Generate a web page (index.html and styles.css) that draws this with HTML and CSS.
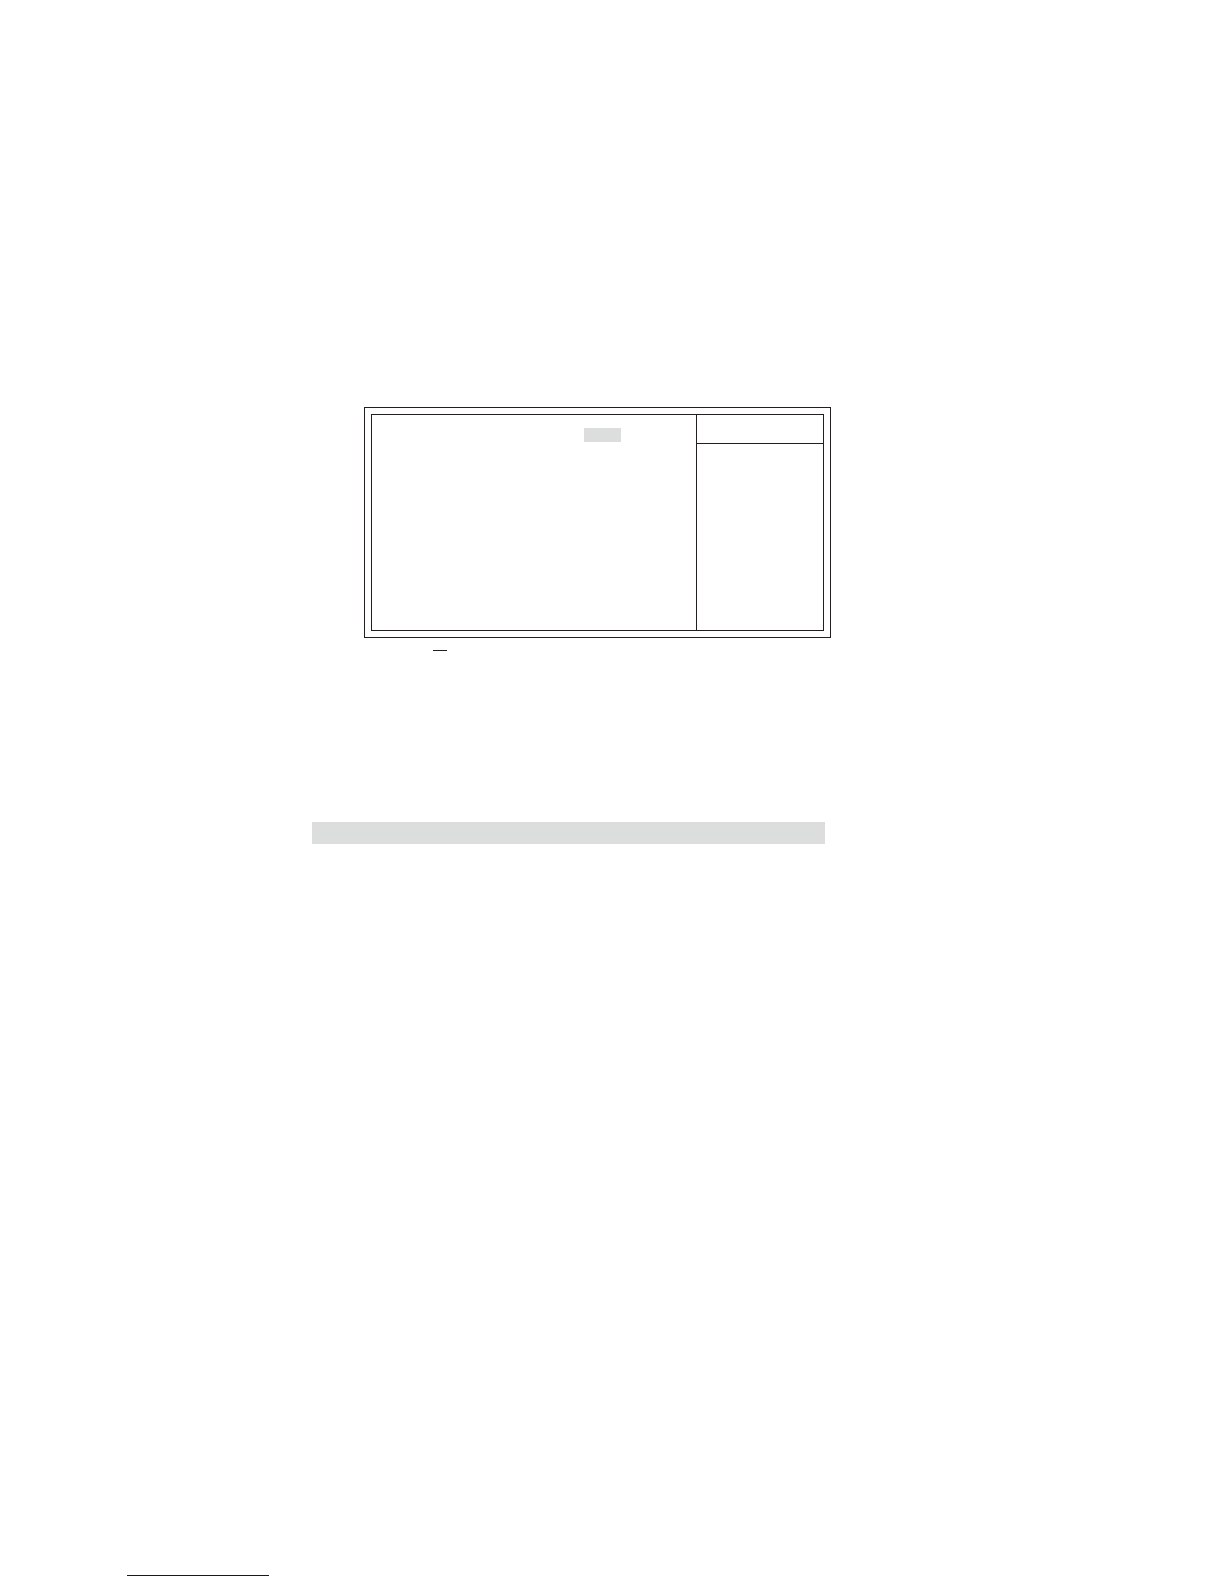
FILE: index.html
```html
<!doctype html>
<html lang="en">
<head>
    <meta charset="UTF-8">
    <meta name="viewport" content="width=device-width, initial-scale=1.0">
    <title>Setup Menu</title>
    <link rel="stylesheet" href="styles.css">
</head>
<body>
    <main class="content">
        <section class="setup-screen">
            <div class="setup-frame">
                <div class="options">
                    <div class="selected-value"></div>
                </div>
                <aside class="help">
                    <div class="help-header"></div>
                </aside>
            </div>
        </section>
        <hr class="dash">
        <div class="heading-bar"></div>
    </main>
    <footer class="footer">
        <hr class="footer-line">
    </footer>
</body>
</html>
```

FILE: styles.css
```css
body {
    display: flex;
    flex-direction: column;
    justify-content: space-between;
    box-sizing: border-box;
    min-height: 100vh;
    margin: 0;
    padding: 407px 0 8px;
    background-color: #ffffff;
    font-family: "Liberation Sans", Arial, sans-serif;
}

hr {
    height: 1px;
    margin: 0;
    border: none;
}

.content {
    padding: 0 393px 0 312px;
}

/* double outline around the setup menu */
.setup-screen {
    margin-left: 52px;
    padding: 6px;
    border: 1px solid #231f20;
}

.setup-frame {
    display: grid;
    grid-template-columns: 1fr 127px;
    min-height: 215px;
    border: 1px solid #231f20;
}

.options {
    display: flex;
    justify-content: flex-end;
    align-items: flex-start;
    padding: 13px 75px 13px 0;
}

.selected-value {
    width: 37px;
    height: 14px;
    background-color: #dcdddd;
}

.help {
    border-left: 1px solid #231f20;
}

.help-header {
    height: 28px;
    border-bottom: 1px solid #231f20;
}

.dash {
    width: 14px;
    margin: 12px 0 0 121px;
    background-color: #231f20;
}

.heading-bar {
    height: 22px;
    margin: 171px 6px 0 0;
    background-color: #dcdddd;
}

.footer {
    padding-left: 127px;
}

.footer-line {
    width: 142px;
    background-color: #0a0a8c;
}
```
